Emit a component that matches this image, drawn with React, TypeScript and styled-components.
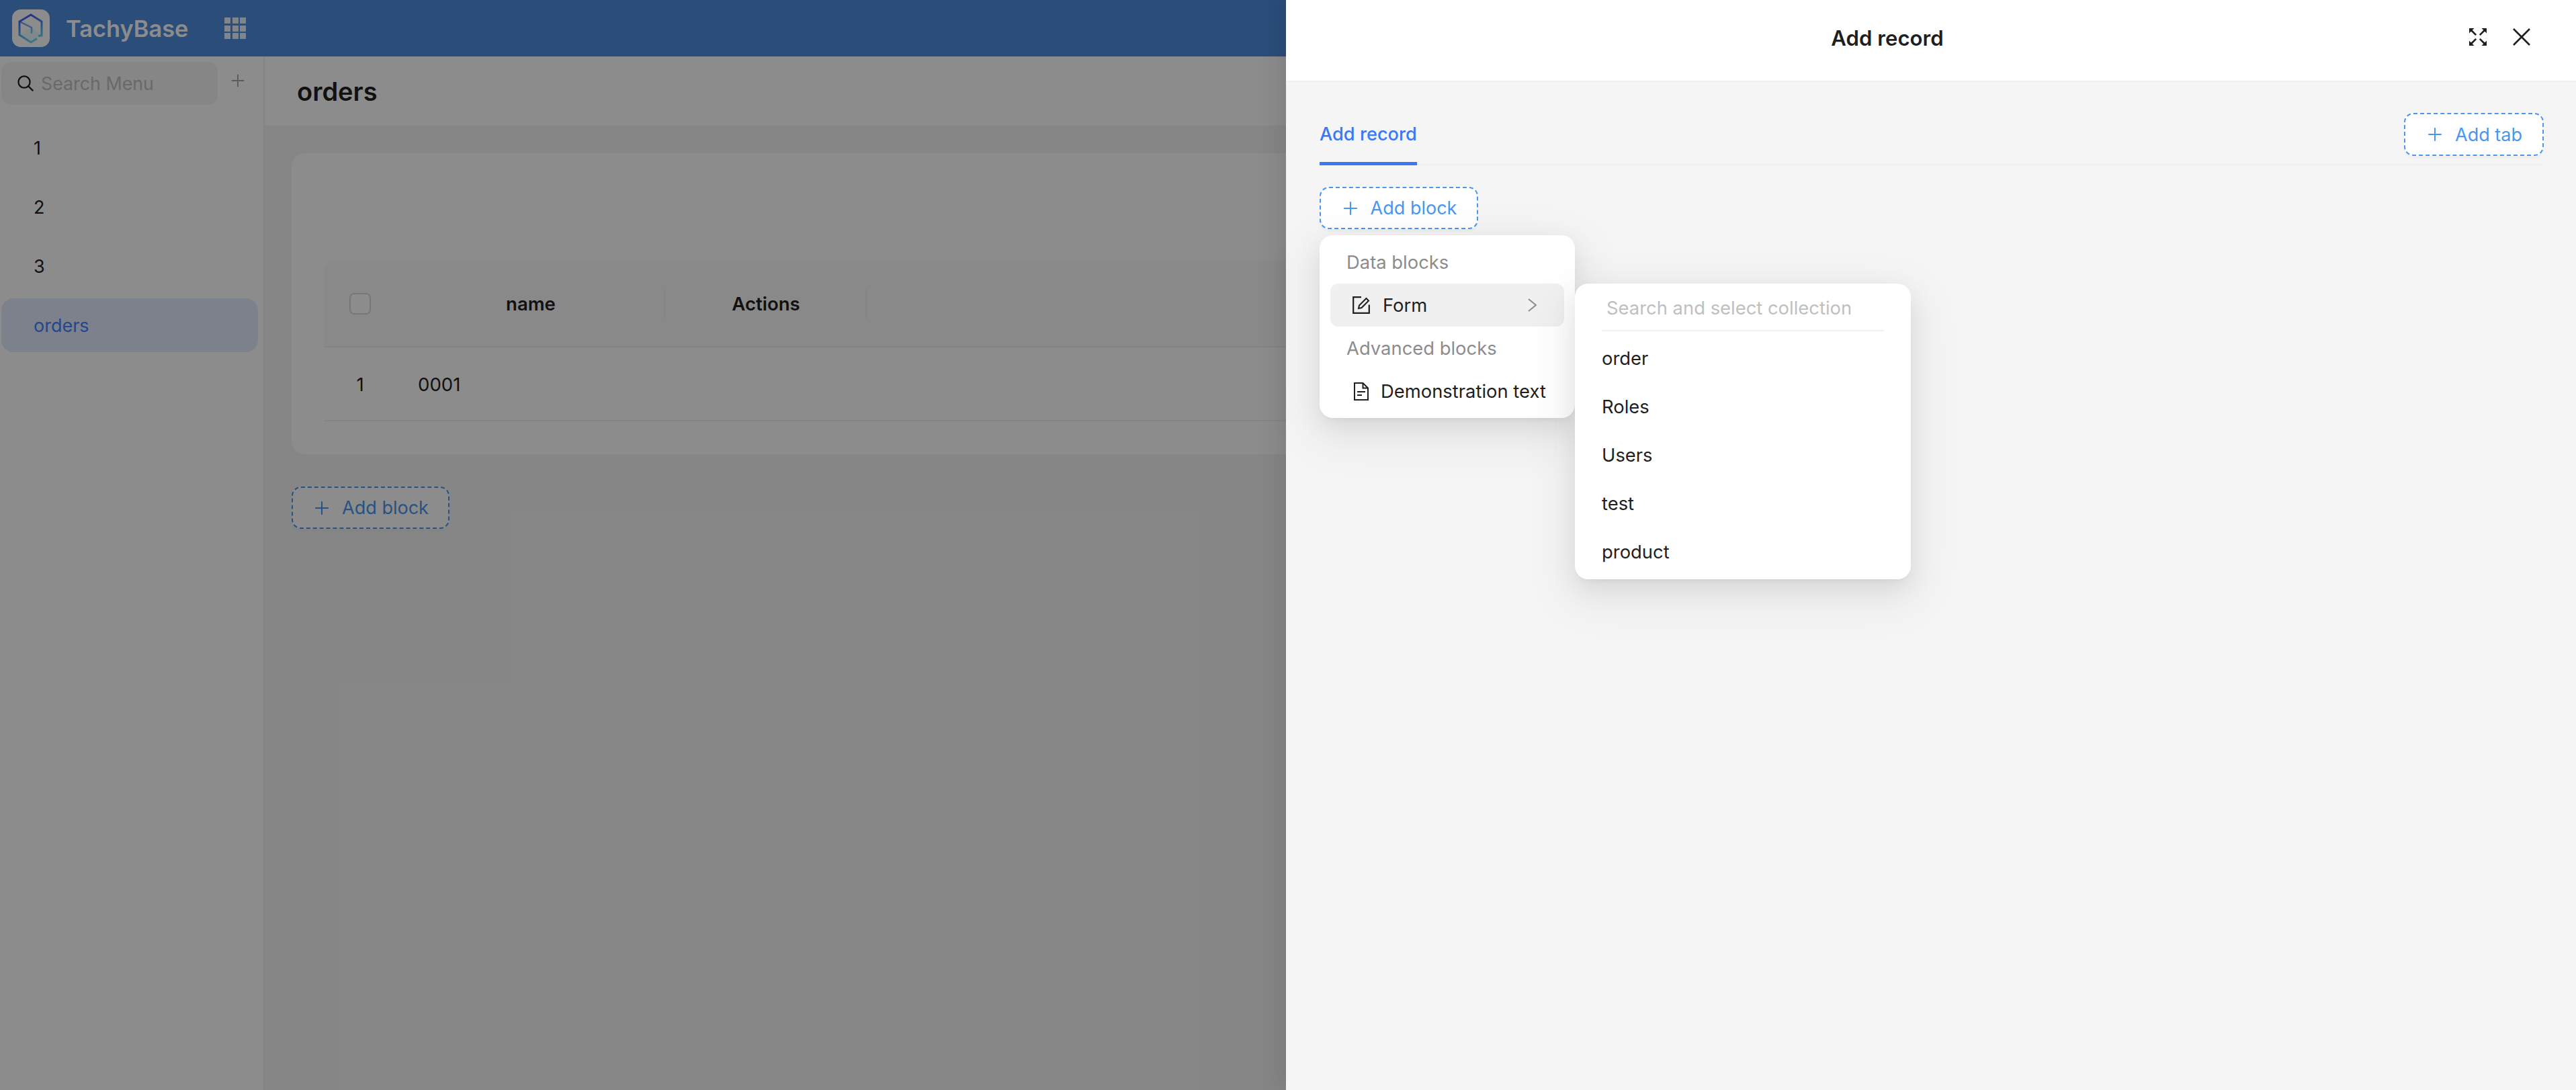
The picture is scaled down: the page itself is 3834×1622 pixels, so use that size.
import React from 'react';
import styled, { createGlobalStyle } from 'styled-components';
import { AiOutlinePlus } from 'react-icons/ai';

const GlobalStyle = createGlobalStyle`
  * {
    box-sizing: border-box;
  }

  html, body {
    margin: 0;
    padding: 0;
    width: 3834px;
    height: 1622px;
    overflow: hidden;
    background: #f5f5f5;
    font-family: Inter, "Liberation Sans", sans-serif;
    color: #1f1f1f;
  }
`;

const Page = styled.div`
  position: relative;
  width: 3834px;
  height: 1622px;
  overflow: hidden;
  display: flex;
  flex-direction: column;
`;

const Header = styled.header`
  height: 84px;
  flex: none;
  background: #4e8cdf;
  display: flex;
  align-items: center;
  padding-left: 18px;
`;

const LogoBox = styled.div`
  width: 56px;
  height: 56px;
  border-radius: 13px;
  background: #fff;
  display: flex;
`;

const Brand = styled.div`
  margin-left: 24px;
  width: 181px;
  font-size: 34.4px;
  font-weight: 600;
  color: #fff;
  white-space: nowrap;
`;

const AppGrid = styled.div`
  margin-left: 55px;
  width: 32px;
  height: 32px;
  display: grid;
  grid-template-columns: repeat(3, 9px);
  grid-template-rows: repeat(3, 9px);
  gap: 2.5px;

  span {
    background: #e6f2ff;
  }
`;

const Body = styled.div`
  flex: 1;
  display: flex;
  min-height: 0;
`;

const Sidebar = styled.aside`
  width: 394px;
  flex: none;
  background: #fff;
  border-right: 2px solid #f0f0f0;
  padding: 8px 0 0 2px;
`;

const SearchRow = styled.div`
  display: flex;
  align-items: flex-start;
`;

const SearchBox = styled.div`
  width: 322px;
  height: 64px;
  border-radius: 14px;
  background: #f5f5f5;
  display: flex;
  align-items: center;
  padding-left: 24px;
  font-size: 26.8px;
  color: #bfbfbf;
  gap: 11px;

  svg {
    flex: none;
  }
`;

const SidebarAdd = styled.div`
  margin: 15px 0 0 17px;
  color: #a6a6a6;
  display: flex;
`;

const MenuList = styled.ul`
  list-style: none;
  margin: 24px 0 0;
  padding: 0;
  width: 382px;
  display: flex;
  flex-direction: column;
  gap: 8px;
`;

const MenuItem = styled.li<{ $active?: boolean }>`
  height: 80px;
  display: flex;
  align-items: center;
  padding-left: 48px;
  border-radius: 18px;
  font-size: 27px;
  background: ${(p) => (p.$active ? '#e3ecfe' : 'transparent')};
  color: ${(p) => (p.$active ? '#4480ff' : '#1f1f1f')};
`;

const Main = styled.main`
  flex: 1;
  min-width: 0;
  display: flex;
  flex-direction: column;
`;

const PageHeader = styled.div`
  height: 103px;
  flex: none;
  background: #fff;
  display: flex;
  align-items: center;
  padding-left: 48px;
  font-size: 38px;
  font-weight: 600;
`;

const Content = styled.div`
  padding: 41px 40px;
`;

const Card = styled.section`
  height: 448px;
  background: #fff;
  border-radius: 20px;
  padding: 160px 48px 0;
`;

const TableRow = styled.div<{ $head?: boolean }>`
  display: grid;
  grid-template-columns: 108px 400px 300px 1fr;
  align-items: center;
  height: ${(p) => (p.$head ? '129px' : '110px')};
  padding-top: ${(p) => (p.$head ? '0' : '2px')};
  background: ${(p) => (p.$head ? '#fafafa' : '#fff')};
  border-bottom: 2px solid #f0f0f0;
  border-radius: ${(p) => (p.$head ? '16px 16px 0 0' : '0')};
  font-size: 27.6px;
`;

const HeadCell = styled.div`
  position: relative;
  height: 100%;
  display: flex;
  align-items: center;
  justify-content: center;
  font-weight: 600;

  &::after {
    content: '';
    position: absolute;
    right: 0;
    top: 42px;
    height: 44px;
    width: 2px;
    background: #f0f0f0;
  }
`;

const SelectCell = styled.div`
  display: flex;
  justify-content: center;
`;

const Checkbox = styled.div`
  width: 32px;
  height: 32px;
  border-radius: 7px;
  border: 2px solid #d9d9d9;
  background: #fff;
`;

const BodyCell = styled.div`
  padding-left: 32px;
`;

const DashedButton = styled.div<{ $width: number; $short?: boolean }>`
  width: ${(p) => p.$width}px;
  height: ${(p) => (p.$short ? 63 : 64)}px;
  background: #fff;
  border: 2px dashed #4a96f0;
  border-radius: 14px;
  color: #4a96f0;
  font-size: 27px;
  display: flex;
  align-items: center;
  justify-content: center;
  gap: 16px;
  box-shadow: 0 4px 0 rgba(0, 0, 0, 0.02);
  flex: none;
`;

const OuterAdd = styled(DashedButton)`
  margin-top: 48px;
`;

const Overlay = styled.div`
  position: absolute;
  inset: 0;
  background: rgba(0, 0, 0, 0.45);
`;

const Drawer = styled.div`
  position: absolute;
  top: 0;
  right: 0;
  bottom: 0;
  width: 1920px;
  background: #f5f5f5;
  display: flex;
  flex-direction: column;
  box-shadow: -14px 0 28px rgba(0, 0, 0, 0.08);
`;

const DrawerHeader = styled.div`
  height: 122px;
  flex: none;
  background: #fff;
  border-bottom: 2px solid #f0f0f0;
  display: flex;
  align-items: center;
  padding-bottom: 10px;
`;

const DrawerTitle = styled.div`
  flex: 1;
  text-align: center;
  padding: 3px 0 0 29px;
  font-size: 31.2px;
  font-weight: 600;
`;

const DrawerActions = styled.div`
  display: flex;
  align-items: center;
  gap: 39px;
  padding-right: 68px;
  color: #1f1f1f;
`;

const DrawerBody = styled.div`
  padding: 46px 48px 0 50px;
`;

const TabBar = styled.div`
  height: 78px;
  display: flex;
  align-items: flex-start;
  justify-content: space-between;
  border-bottom: 2px solid #f0f0f0;
`;

const Tab = styled.div`
  height: 78px;
  font-size: 27.2px;
  font-weight: 500;
  line-height: 64px;
  color: #3b78f5;
  border-bottom: 5px solid #3b78f5;
`;

const BlockArea = styled.div`
  position: relative;
  margin-top: 32px;
`;

const Popup = styled.div`
  background: #fff;
  border-radius: 20px;
  box-shadow:
    0 14px 38px rgba(0, 0, 0, 0.08),
    0 7px 14px -10px rgba(0, 0, 0, 0.12),
    0 22px 68px 20px rgba(0, 0, 0, 0.05);
  font-size: 27.4px;
`;

const BlockMenu = styled(Popup)`
  position: absolute;
  top: 72px;
  left: 0;
  width: 380px;
  height: 272px;
  padding: 8px 16px;
`;

const GroupTitle = styled.div`
  height: 64px;
  display: flex;
  align-items: center;
  padding-left: 24px;
  color: #8c8c8c;
`;

const BlockItem = styled.div<{ $active?: boolean; $gap: number }>`
  height: 64px;
  border-radius: 12px;
  display: flex;
  align-items: center;
  padding-left: 31px;
  gap: ${(p) => p.$gap}px;
  background: ${(p) => (p.$active ? '#f0f0f0' : 'transparent')};
`;

const IconSlot = styled.span`
  width: 30px;
  flex: none;
  display: flex;
  justify-content: center;
`;

const Chevron = styled.span`
  margin-left: auto;
  margin-right: 41px;
  display: flex;
`;

const CollectionMenu = styled(Popup)`
  position: absolute;
  top: 144px;
  left: 380px;
  width: 500px;
  height: 440px;
  padding: 0 40px;
`;

const CollectionSearch = styled.div`
  height: 71px;
  display: flex;
  align-items: center;
  padding: 2px 0 0 7px;
  margin-bottom: 4px;
  color: #bfbfbf;
  border-bottom: 2px solid #f0f0f0;
`;

const CollectionItem = styled.div`
  height: 72px;
  display: flex;
  align-items: center;
`;

const collections = ['order', 'Roles', 'Users', 'test', 'product'];

const Logo = () => (
  <svg width="56" height="56" viewBox="0 0 56 56" fill="none">
    <defs>
      <linearGradient id="hex" gradientUnits="userSpaceOnUse" x1="18" y1="8" x2="30" y2="50">
        <stop offset="0" stopColor="#4a50f0" />
        <stop offset="0.5" stopColor="#4a9ae8" />
        <stop offset="1" stopColor="#72e0f0" />
      </linearGradient>
    </defs>
    <path d="M11 38 L28 27 L44 38 L28 49 Z" fill="#72e0f0" opacity="0.2" />
    <path
      d="M39 39.5 L44 39 V18 L28 8 L11 18 V38 L28 49 L37 43.5"
      stroke="url(#hex)"
      strokeWidth="3"
    />
    <path d="M11 18 L29 27 V36" stroke="url(#hex)" strokeWidth="2.4" opacity="0.75" />
  </svg>
);

const SearchIcon = () => (
  <svg width="24" height="24" viewBox="0 0 24 24" fill="none" stroke="#1f1f1f" strokeWidth="2.3">
    <circle cx="10" cy="10" r="8.6" />
    <path d="M16.2 16.2 L23.2 23.2" />
  </svg>
);

const ExpandIcon = () => (
  <svg width="26" height="26" viewBox="0 0 26 26" fill="#1f1f1f">
    {[0, 90, 180, 270].map((angle) => (
      <g key={angle} transform={`rotate(${angle} 13 13)`}>
        <path d="M0 0 H7.5 L0 7.5 Z" />
        <path d="M3 3 L10.2 10.2" stroke="#1f1f1f" strokeWidth="2.6" />
      </g>
    ))}
  </svg>
);

const CloseIcon = () => (
  <svg width="26" height="26" viewBox="0 0 26 26" fill="none" stroke="#1f1f1f" strokeWidth="2.6">
    <path d="M1 1 L25 25 M25 1 L1 25" />
  </svg>
);

const FormIcon = () => (
  <svg width="26" height="26" viewBox="0 0 26 26" fill="none" stroke="#1f1f1f" strokeWidth="2.2">
    <path d="M13 1.2 H1.2 V24.8 H24.8 V12.5" />
    <path d="M9 18 L10 13.5 L20.5 3 L24 6.5 L13.5 17 Z" strokeWidth="2" />
  </svg>
);

const DocIcon = () => (
  <svg width="22" height="27" viewBox="0 0 22 27" fill="none" stroke="#1f1f1f" strokeWidth="2">
    <path d="M1 1 H13.5 L21 8.5 V26 H1 Z" />
    <path d="M13.5 1 V8.5 H21" />
    <path d="M5 14 H17 M5 19 H12" />
  </svg>
);

const ChevronIcon = () => (
  <svg width="13" height="20" viewBox="0 0 13 20" fill="none" stroke="#8c8c8c" strokeWidth="2">
    <path d="M1 1 L12 10 L1 19" />
  </svg>
);

const App = () => {
  return (
    <Page>
      <GlobalStyle />
      <Header>
        <LogoBox>
          <Logo />
        </LogoBox>
        <Brand>TachyBase</Brand>
        <AppGrid>
          {Array.from({ length: 9 }).map((_, i) => (
            <span key={i} />
          ))}
        </AppGrid>
      </Header>

      <Body>
        <Sidebar>
          <SearchRow>
            <SearchBox>
              <SearchIcon />
              Search Menu
            </SearchBox>
            <SidebarAdd>
              <AiOutlinePlus size={26} />
            </SidebarAdd>
          </SearchRow>
          <MenuList>
            <MenuItem>1</MenuItem>
            <MenuItem>2</MenuItem>
            <MenuItem>3</MenuItem>
            <MenuItem $active>orders</MenuItem>
          </MenuList>
        </Sidebar>

        <Main>
          <PageHeader>orders</PageHeader>
          <Content>
            <Card>
              <TableRow $head>
                <SelectCell>
                  <Checkbox />
                </SelectCell>
                <HeadCell>name</HeadCell>
                <HeadCell>Actions</HeadCell>
                <div />
              </TableRow>
              <TableRow>
                <SelectCell>1</SelectCell>
                <BodyCell>0001</BodyCell>
              </TableRow>
            </Card>
            <OuterAdd $width={235} $short>
              <AiOutlinePlus size={28} />
              Add block
            </OuterAdd>
          </Content>
        </Main>
      </Body>

      <Overlay />

      <Drawer>
        <DrawerHeader>
          <DrawerTitle>Add record</DrawerTitle>
          <DrawerActions>
            <ExpandIcon />
            <CloseIcon />
          </DrawerActions>
        </DrawerHeader>
        <DrawerBody>
          <TabBar>
            <Tab>Add record</Tab>
            <DashedButton $width={208}>
              <AiOutlinePlus size={28} />
              Add tab
            </DashedButton>
          </TabBar>
          <BlockArea>
            <DashedButton $width={236} $short>
              <AiOutlinePlus size={28} />
              Add block
            </DashedButton>
            <BlockMenu>
              <GroupTitle>Data blocks</GroupTitle>
              <BlockItem $active $gap={17}>
                <IconSlot>
                  <FormIcon />
                </IconSlot>
                Form
                <Chevron>
                  <ChevronIcon />
                </Chevron>
              </BlockItem>
              <GroupTitle>Advanced blocks</GroupTitle>
              <BlockItem $gap={14}>
                <IconSlot>
                  <DocIcon />
                </IconSlot>
                Demonstration text
              </BlockItem>
            </BlockMenu>
            <CollectionMenu>
              <CollectionSearch>Search and select collection</CollectionSearch>
              {collections.map((name) => (
                <CollectionItem key={name}>{name}</CollectionItem>
              ))}
            </CollectionMenu>
          </BlockArea>
        </DrawerBody>
      </Drawer>
    </Page>
  );
};

export default App;
